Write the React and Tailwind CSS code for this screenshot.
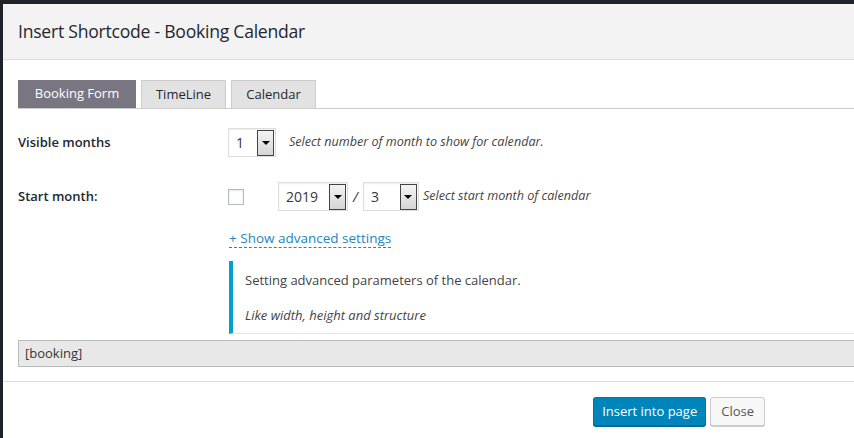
import React from "react";

const font = { fontFamily: '"Open Sans", "Noto Sans", sans-serif' };

const Select = ({ value, width }) => (
    <div
        className={`flex items-center justify-between h-[29px] bg-white border border-[#ddd] shadow-[inset_0_1px_2px_rgba(0,0,0,0.07)] pl-[7px] pr-[1px] ${width}`}
    >
        <span className="text-[14px] text-[#32373c]">{value}</span>
        <span className="w-[17px] h-[26px] border border-[#444] bg-gradient-to-b from-[#f4f4f4] to-[#d5d5d5] flex items-center justify-center">
            <span className="w-0 h-0 border-l-[4px] border-r-[4px] border-t-[4px] border-l-transparent border-r-transparent border-t-black" />
        </span>
    </div>
);

export default function App() {
    return (
        <div
            className="w-[854px] h-[438px] bg-[#1d2327] pt-[4px] pl-[3px] overflow-hidden"
            style={font}
        >
            <div className="bg-white h-[434px] flex flex-col overflow-hidden">
                {/* Header */}
                <div className="h-[56px] shrink-0 bg-[#f3f3f3] border-b border-[#ddd] px-[15px] flex items-center">
                    <h1 className="text-[17.6px] text-[#23282d] tracking-[-0.25px]">
                        Insert Shortcode - Booking Calendar
                    </h1>
                </div>

                {/* Body */}
                <div className="pl-[15px] pt-[20px] flex flex-col">
                    {/* Tabs */}
                    <div className="flex items-end gap-[5px] border-b border-[#ccc] w-[900px] h-[29px]">
                        <div className="h-[28px] w-[118px] bg-[#797682] border border-[#797682] text-white text-[13px] flex items-center justify-center">
                            Booking Form
                        </div>
                        <div className="h-[28px] w-[85px] bg-[#e2e2e2] border border-b-0 border-[#ccc] text-[#23282d] text-[13px] font-medium flex items-center justify-center">
                            TimeLine
                        </div>
                        <div className="h-[28px] w-[85px] bg-[#e2e2e2] border border-b-0 border-[#ccc] text-[#23282d] text-[13px] font-medium flex items-center justify-center">
                            Calendar
                        </div>
                    </div>

                    {/* Visible months */}
                    <div className="flex items-center mt-[19px] h-[29px]">
                        <div className="w-[210px] text-[13px] font-semibold text-[#23282d]">
                            Visible months
                        </div>
                        <Select value="1" width="w-[48px]" />
                        <span className="ml-[13px] text-[12.6px] italic text-[#444]">
                            Select number of month to show for calendar.
                        </span>
                    </div>

                    {/* Start month */}
                    <div className="flex items-center mt-[25px] h-[29px]">
                        <div className="w-[210px] text-[13px] font-semibold text-[#23282d]">
                            Start month:
                        </div>
                        <span className="w-[16px] h-[16px] border border-[#b4b9be] bg-white shadow-[inset_0_1px_2px_rgba(0,0,0,0.1)]" />
                        <div className="ml-[34px]">
                            <Select value="2019" width="w-[70px]" />
                        </div>
                        <span className="mx-[5px] text-[14px] italic text-[#32373c]">/</span>
                        <Select value="3" width="w-[56px]" />
                        <span className="ml-[4px] text-[12.6px] italic text-[#444]">
                            Select start month of calendar
                        </span>
                    </div>

                    {/* Advanced settings */}
                    <div className="pl-[211px] mt-[14px]">
                        <a className="inline-block text-[13.5px] font-medium text-[#2386bd] border-b border-dashed border-[#2386bd] leading-[18px]">
                            + Show advanced settings
                        </a>
                        <div className="mt-[12px] w-[700px] border-l-[4px] border-[#00a0d2] border-b border-b-[#e5e5e5] pl-[12px] pt-[10px] pb-[9px] text-[13px] text-[#444]">
                            <p className="leading-[18px]">Setting advanced parameters of the calendar.</p>
                            <p className="mt-[17px] italic leading-[18px]">Like width, height and structure</p>
                        </div>
                    </div>

                    {/* Shortcode */}
                    <div className="mt-[6px] w-[900px] h-[27px] bg-[#e8e8e8] border border-[#bbb] px-[6px] flex items-center text-[13px] text-[#32373c]">
                        [booking]
                    </div>
                </div>

                {/* Footer */}
                <div className="mt-[14px] border-t border-[#ddd] flex justify-end gap-[4px] pt-[15px] pr-[89px]">
                    <button className="h-[29px] px-[8px] bg-[#0085ba] border border-[#0073aa] border-b-[#006799] rounded-[3px] shadow-[0_1px_0_#006799] text-white text-[13px]">
                        Insert into page
                    </button>
                    <button className="h-[29px] px-[10px] bg-[#f7f7f7] border border-[#ccc] rounded-[3px] shadow-[0_1px_0_#ccc] text-[#555] text-[13px]">
                        Close
                    </button>
                </div>
            </div>
        </div>
    );
}
